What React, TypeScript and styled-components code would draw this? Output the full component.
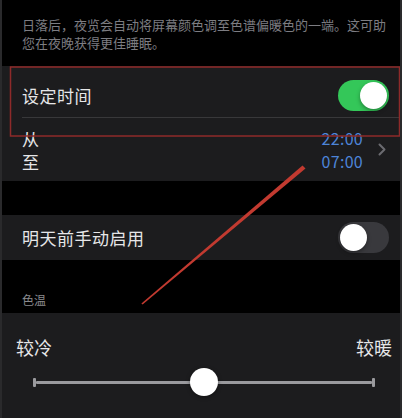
import React, { useState } from 'react';
import styled, { createGlobalStyle } from 'styled-components';

const GlobalStyle = createGlobalStyle`
  html, body {
    margin: 0;
    padding: 0;
    background: #000;
  }
  * {
    box-sizing: border-box;
  }
`;

const Page = styled.div`
  position: relative;
  width: 402px;
  height: 418px;
  overflow: hidden;
  background: #000;
  border-left: 2px solid #2a2a2c;
  border-right: 2px solid #2a2a2c;
  font-family: 'Noto Sans CJK SC', 'Noto Sans', sans-serif;
  color: #e6e6e8;
`;

const Footnote = styled.p`
  margin: 0;
  padding: 16px 6px 0 20px;
  font-size: 13px;
  line-height: 18px;
  color: #7d7d82;
  letter-spacing: 0;
`;

const Group = styled.div<{ $top: number }>`
  margin-top: ${(p) => p.$top}px;
  background: #1c1c1e;
`;

const Row = styled.div<{ $height: number; $right?: number; $shift?: number }>`
  display: flex;
  align-items: center;
  justify-content: space-between;
  height: ${(p) => p.$height}px;
  padding: ${(p) => p.$shift ?? 0}px ${(p) => p.$right ?? 11}px 0 20px;
`;

const Separator = styled.div`
  height: 1px;
  margin-left: 20px;
  background: #38383a;
`;

const Label = styled.span`
  font-size: 17px;
  letter-spacing: 0.5px;
`;

const Stack = styled.div<{ $align?: string }>`
  display: flex;
  flex-direction: column;
  align-items: ${(p) => p.$align ?? 'flex-start'};
  line-height: 23px;
`;

const Time = styled.span`
  font-size: 16px;
  color: #4d84d8;
  letter-spacing: 0.3px;
`;

const Detail = styled.div`
  display: flex;
  align-items: center;
  gap: 15px;
`;

const Track = styled.button<{ $on: boolean }>`
  position: relative;
  width: 51px;
  height: 31px;
  border: none;
  padding: 0;
  border-radius: 16px;
  background: ${(p) => (p.$on ? '#34c759' : '#39393d')};
  cursor: pointer;
`;

const Knob = styled.span<{ $on: boolean }>`
  position: absolute;
  top: 2px;
  left: ${(p) => (p.$on ? '22px' : '2px')};
  width: 27px;
  height: 27px;
  border-radius: 50%;
  background: #fff;
  box-shadow: 0 2px 4px rgba(0, 0, 0, 0.35);
`;

const SectionHeader = styled.div`
  padding: 32px 20px 0;
  height: 53px;
  font-size: 12px;
  line-height: 16px;
  color: #8a8a8e;
`;

const TempGroup = styled.div`
  background: #1c1c1e;
  height: 105px;
  padding: 21px 8px 0 14px;
`;

const TempLabels = styled.div`
  display: flex;
  justify-content: space-between;
  font-size: 18px;
  line-height: 26px;
  color: #e6e6e8;
`;

const SliderArea = styled.div`
  position: relative;
  height: 30px;
  margin: 7px 17px 0 17px;
  display: flex;
  align-items: center;
`;

const SliderLine = styled.div`
  flex: 1;
  height: 3px;
  background: #9a9a9e;
  border-radius: 1px;
`;

const SliderCap = styled.div`
  width: 3px;
  height: 9px;
  background: #9a9a9e;
  border-radius: 1px;
`;

const SliderThumb = styled.div`
  position: absolute;
  top: 1px;
  width: 28px;
  height: 28px;
  margin-left: -14px;
  border-radius: 50%;
  background: #fff;
  box-shadow: 0 1px 4px rgba(0, 0, 0, 0.4);
`;

const Markup = styled.svg`
  position: absolute;
  inset: 0;
  pointer-events: none;
`;

const Toggle: React.FC<{ on: boolean; onChange: (v: boolean) => void }> = ({ on, onChange }) => (
  <Track $on={on} onClick={() => onChange(!on)}>
    <Knob $on={on} />
  </Track>
);

const Chevron = () => (
  <svg width="8" height="13" viewBox="0 0 8 13">
    <polyline points="1.5,1.5 6.5,6.5 1.5,11.5" fill="none" stroke="#6b6b70" strokeWidth="2" strokeLinecap="round" strokeLinejoin="round" />
  </svg>
);

export default function App() {
  const [scheduled, setScheduled] = useState(true);
  const [manual, setManual] = useState(false);
  const warmth = 0.5;

  return (
    <>
      <GlobalStyle />
      <Page>
        <Footnote>
          日落后，夜览会自动将屏幕颜色调至色谱偏暖色的一端。这可助您在夜晚获得更佳睡眠。
        </Footnote>

        <Group $top={14}>
          <Row $height={51} $shift={8}>
            <Label>设定时间</Label>
            <Toggle on={scheduled} onChange={setScheduled} />
          </Row>
          <Separator />
          <Row $height={63} $right={14}>
            <Stack>
              <Label>从</Label>
              <Label>至</Label>
            </Stack>
            <Detail>
              <Stack $align="flex-end">
                <Time>22:00</Time>
                <Time>07:00</Time>
              </Stack>
              <Chevron />
            </Detail>
          </Row>
        </Group>

        <Group $top={34}>
          <Row $height={45}>
            <Label>明天前手动启用</Label>
            <Toggle on={manual} onChange={setManual} />
          </Row>
        </Group>

        <SectionHeader>色温</SectionHeader>
        <TempGroup>
          <TempLabels>
            <span>较冷</span>
            <span>较暖</span>
          </TempLabels>
          <SliderArea>
            <SliderCap />
            <SliderLine />
            <SliderCap />
            <SliderThumb style={{ left: `${warmth * 100}%` }} />
          </SliderArea>
        </TempGroup>

        <Markup width="402" height="418" viewBox="0 0 402 418">
          <rect x="8.5" y="67" width="389" height="69" fill="none" stroke="#8e2a2a" strokeWidth="1.5" />
          <polygon points="300.5,165.5 303.5,168.5 140.6,304.4 139.4,303.6" fill="#c23a30" />
        </Markup>
      </Page>
    </>
  );
}
